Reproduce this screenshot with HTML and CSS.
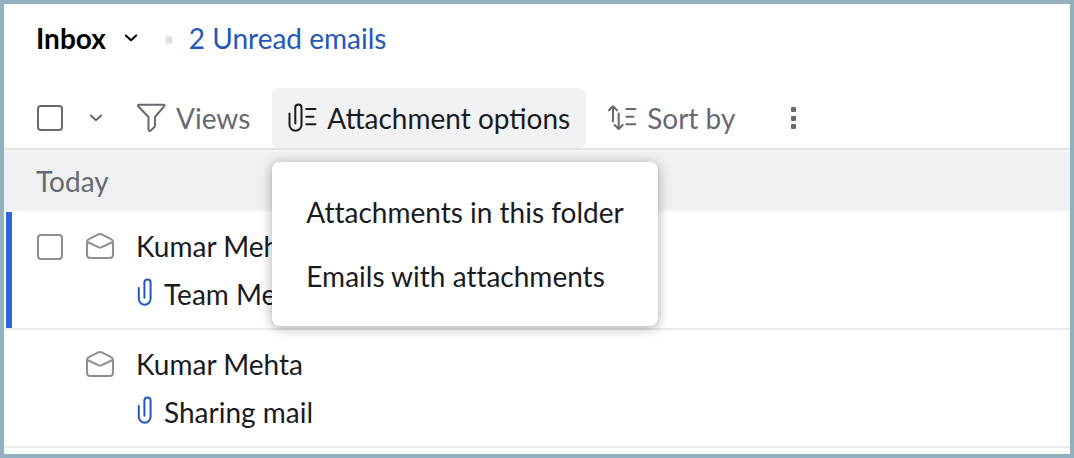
FILE: index.html
```html
<!DOCTYPE html>
<html lang="en">
<head>
  <meta charset="UTF-8">
  <meta name="viewport" content="width=device-width, initial-scale=1.0">
  <title>Inbox</title>
  <link rel="stylesheet" href="styles.css">
</head>
<body>
  <!-- Shared icons -->
  <svg class="sprite" aria-hidden="true">
    <symbol id="icon-chevron" viewBox="0 0 14 8">
      <path d="M1.800 1.500L7 6.200L12.200 1.500"/>
    </symbol>
    <symbol id="icon-envelope" viewBox="0 0 28 28">
      <path d="M1 10Q1 8 2.800 7.200L12.800 2.200Q14 1.700 15.200 2.200L25.200 7.200Q27 8 27 10V22.500Q27 26 23.500 26H4.500Q1 26 1 22.500Z"/>
      <path d="M1.300 10L12.800 15.400Q14 16 15.200 15.400L26.700 10"/>
    </symbol>
    <symbol id="icon-clip" viewBox="0 0 16 28">
      <path d="M2.800 10V20.800A5.900 5.900 0 0 0 14.600 20.800V4.500A3.100 3.100 0 0 0 8.400 4.500V19.800"/>
    </symbol>
  </svg>

  <main class="mailbox">
    <header class="header">
      <button type="button" class="folder">
        <span>Inbox</span>
        <svg class="chevron"><use href="#icon-chevron"/></svg>
      </button>
      <span class="dot"></span>
      <a href="#unread" class="unread">2 Unread emails</a>
    </header>

    <div class="toolbar">
      <input type="checkbox" class="check" aria-label="Select all">
      <button type="button" class="select-more" aria-label="Selection options">
        <svg class="chevron"><use href="#icon-chevron"/></svg>
      </button>

      <button type="button" class="tool">
        <svg class="tool-icon" viewBox="0 0 30 30">
          <path d="M2 1.700H26.500Q28 1.900 27.300 3.200L18 14V22.500Q18 23.500 17.200 24.300L13.600 27.700Q11.500 28.700 11.500 26.700V14L1.200 3.200Q0.500 1.900 2 1.700Z"/>
        </svg>
        Views
      </button>

      <div class="dropdown">
        <button type="button" class="tool active" aria-expanded="true">
          <svg class="tool-icon" viewBox="0 0 30 30">
            <path d="M1.500 10.500V21.800A6 6 0 0 0 13.500 21.800V4.700A3.100 3.100 0 0 0 7.300 4.700V20.500"/>
            <path d="M18.300 6H27.500M18.300 13.700H25.500M18.300 21.300H27.500"/>
          </svg>
          Attachment options
        </button>
        <div class="menu">
          <button type="button" class="menu-item">Attachments in this folder</button>
          <button type="button" class="menu-item">Emails with attachments</button>
        </div>
      </div>

      <button type="button" class="tool">
        <svg class="tool-icon" viewBox="0 0 30 30">
          <path d="M5 18.500V3.500M1 7.300L5 3.200L9 7.300"/>
          <path d="M10.700 10.500V26M6.700 22L10.700 26L14.700 22"/>
          <path d="M18.300 6H27.500M18.300 13.700H25.500M18.300 21.300H27.500"/>
        </svg>
        Sort by
      </button>

      <button type="button" class="kebab" aria-label="More">
        <svg viewBox="0 0 6 24">
          <rect x="1" y="1" width="5" height="5" rx="1"/>
          <rect x="1" y="10" width="5" height="5" rx="1"/>
          <rect x="1" y="18" width="5" height="5" rx="1"/>
        </svg>
      </button>
    </div>

    <h2 class="day">Today</h2>

    <article class="mail selected">
      <input type="checkbox" class="check" aria-label="Select mail from Kumar Mehta">
      <svg class="envelope"><use href="#icon-envelope"/></svg>
      <div class="mail-text">
        <div class="sender">Kumar Mehta</div>
        <div class="subject">
          <svg class="clip"><use href="#icon-clip"/></svg>
          Team Meeting
        </div>
      </div>
    </article>

    <article class="mail">
      <svg class="envelope"><use href="#icon-envelope"/></svg>
      <div class="mail-text">
        <div class="sender">Kumar Mehta</div>
        <div class="subject">
          <svg class="clip"><use href="#icon-clip"/></svg>
          Sharing mail
        </div>
      </div>
    </article>
  </main>
</body>
</html>
```
FILE: styles.css
```css
* {
  box-sizing: border-box;
}

body {
  margin: 0;
  font-family: Lato, sans-serif;
  font-size: 28px;
  color: #1a1b1e;
  background: #fff;
}

button {
  padding: 0;
  border: none;
  background: none;
  font: inherit;
  color: inherit;
  cursor: pointer;
}

svg {
  flex-shrink: 0;
  fill: none;
  stroke: currentColor;
  stroke-width: 2;
  stroke-linecap: round;
  stroke-linejoin: round;
}

.sprite {
  display: none;
}

.mailbox {
  min-height: 100vh;
  border: 4px solid #94b0bf;
}

/* Header */
.header {
  display: flex;
  align-items: center;
  height: 68px;
  padding: 0 32px;
}

.folder {
  display: flex;
  align-items: center;
  gap: 18px;
  font-weight: bold;
  color: #000;
}

.chevron {
  width: 14px;
  height: 8px;
}

.dot {
  width: 8px;
  height: 8px;
  margin: 4px 16px 0 27px;
  border-radius: 50%;
  background: #e2e3e4;
}

.unread {
  color: #2457bd;
  text-decoration: none;
}

/* Toolbar */
.toolbar {
  display: flex;
  align-items: center;
  gap: 6px;
  padding: 16px 33px 0;
  border-bottom: 2px solid #e2e3e4;
  color: #676971;
}

.check {
  appearance: none;
  flex-shrink: 0;
  width: 26px;
  height: 26px;
  margin: 0;
  border: 2px solid #676971;
  border-radius: 4px;
}

.select-more {
  display: flex;
  margin: 0 12px 0 20px;
}

.tool {
  display: flex;
  align-items: center;
  gap: 9px;
  height: 60px;
  padding: 0 16px;
  border-radius: 6px;
  white-space: nowrap;
}

.tool.active {
  background: #f1f2f4;
  color: #1a1b1e;
}

.tool-icon {
  width: 30px;
  height: 30px;
}

.kebab {
  display: flex;
  margin-left: 33px;
}

.kebab svg {
  width: 6px;
  height: 24px;
  fill: currentColor;
  stroke: none;
}

/* Attachment dropdown */
.dropdown {
  position: relative;
}

.menu {
  position: absolute;
  z-index: 10;
  top: 100%;
  left: 0;
  margin-top: 14px;
  padding: 18px 0;
  border-radius: 8px;
  background: #fff;
  color: #1a1b1e;
  box-shadow: 0 2px 12px rgba(0, 0, 0, 0.35);
}

.menu-item {
  display: block;
  width: 100%;
  height: 64px;
  padding: 0 34px;
  font-variant-ligatures: none;
  text-align: left;
  white-space: nowrap;
}

/* Mail list */
.day {
  margin: 0;
  padding: 0 32px;
  border: solid #f6f6f7;
  border-width: 2px 0;
  background: #eff0f2;
  font-size: 28px;
  font-weight: normal;
  line-height: 58px;
  color: #676971;
}

.mail {
  display: grid;
  grid-template-columns: 27px 28px 1fr;
  column-gap: 22px;
  padding: 10px 33px;
  border-bottom: 2px solid #ebebeb;
}

.mail.selected {
  background: linear-gradient(#2b66de, #2b66de) 2px 0 / 6px 100% no-repeat;
}

.mail .check {
  margin-top: 12px;
  border-color: #8e8e8e;
}

.envelope {
  grid-column: 2;
  width: 28px;
  height: 28px;
  margin-top: 10px;
  color: #8e8e8e;
}

.mail-text {
  grid-column: 3;
  line-height: 48px;
}

.subject {
  display: flex;
  align-items: center;
  gap: 12px;
}

.clip {
  width: 16px;
  height: 28px;
  margin-bottom: 4px;
  color: #2457bd;
}
```
